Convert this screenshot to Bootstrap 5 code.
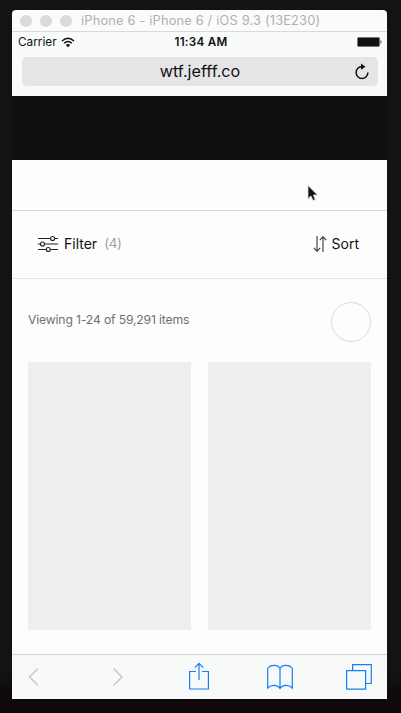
<!DOCTYPE html>
<html lang="en">
<head>
<meta charset="utf-8">
<meta name="viewport" content="width=device-width, initial-scale=1">
<title>iPhone 6</title>
<link href="https://cdn.jsdelivr.net/npm/bootstrap@5.3.0/dist/css/bootstrap.min.css" rel="stylesheet">
<style>
body{background:linear-gradient(#131313 0,#131313 670px,#0e090a 695px);font-family:Inter,"Liberation Sans",sans-serif;height:713px;color:#111;line-height:1}
.phone{width:375px;height:689px;margin:10px 0 0 12px;border-radius:4px 4px 0 0}
.titlebar{height:22px;background:#fafbfb;border-bottom:1px solid #d8d9d9;padding-left:8px;font-size:12.8px;letter-spacing:.19px;color:#b0b0b0}
.dot{width:12px;height:12px;background:#dadada;margin-right:8px}
.wintitle{padding-top:2px;margin-left:1px}
.chrome{height:64px;background:#f9fafa}
.status{height:20px;padding:2px 5px 0 6px;font-size:11.8px}
.status>*{flex:1 1 0}
.clock{font-weight:600;font-size:11.7px;letter-spacing:.25px;padding-left:2px}
.battery{padding-bottom:2px}
.address{height:29px;margin:5px 9px 0 10px;background:#e5e5e7;border-radius:5px;font-size:16.2px;padding-right:8px}
.hero{height:64px;background:#101010}
.blank{height:51px;border-bottom:1px solid #d5d7d9}
.tools{height:68px;border-bottom:1px solid #e1e3e5;padding:0 28px 2px 26px;font-size:14px}
.page{background:#fdfdfd}
.summary{height:83px;padding:2px 16px 0;color:#707070}
.count{font-size:12.2px;letter-spacing:-.16px;padding-bottom:3px}
.ring{width:40px;height:40px;border:1px solid #d9dadb}
.tile{height:268px;background:#edeeee}
.tiles{gap:17px;padding:0 16px}
.bottombar{height:45px;background:#f8f9f9;border-top:1px solid #d5d5d4;padding:0 15px 0 16px}
.bottombar svg,.tools svg{flex:none;display:block}
.next{margin-left:72px}
.share{margin:0 58px 2px 65px}
.tabs{margin-left:53px}
.filter{padding-left:2px}
.pointer{left:306px;top:184px}
.muted{color:#a0a0a0;font-size:13.4px;margin-left:7px;letter-spacing:-.3px}
</style>
<script src="https://cdn.jsdelivr.net/npm/bootstrap@5.3.0/dist/js/bootstrap.bundle.min.js"></script>
</head>
<body class="overflow-hidden position-relative">
<main class="phone d-flex flex-column overflow-hidden text-nowrap">
  <header class="titlebar d-flex align-items-center">
    <span class="dot rounded-circle"></span><span class="dot rounded-circle"></span><span class="dot rounded-circle"></span>
    <span class="wintitle">iPhone 6 - iPhone 6 / iOS 9.3 (13E230)</span>
  </header>
  <div class="chrome">
    <div class="status d-flex align-items-center">
      <span class="d-flex align-items-center gap-1">Carrier
        <svg width="14" height="11" viewBox="0 0 14 11" fill="none" stroke="#111" stroke-width="1.5"><path d="M1 4Q7-1.600 13 4M3.100 6.300Q7 2.800 10.900 6.300"/><path d="M4.800 8Q7 6 9.200 8L7 10.300Z" fill="#111" stroke="none"/></svg>
      </span>
      <span class="clock text-center">11:34 AM</span>
      <span class="battery d-flex justify-content-end"><svg width="25" height="10" viewBox="0 0 25 10"><rect x=".5" y=".5" width="22" height="9" rx="1" fill="#111" stroke="#777"/><path d="M23.500 3q2 2 0 4z" fill="#222"/></svg></span>
    </div>
    <div class="address d-flex align-items-center">
      <span class="flex-fill text-center ps-4">wtf.jefff.co</span>
      <svg width="16" height="18" viewBox="0 0 16 18"><path d="M8 3.600A5.900 5.900 0 1 0 13.900 9.500" fill="none" stroke="#111" stroke-width="1.500"/><path d="M7 .6 11.500 3.700 7 6.800Z" fill="#111"/></svg>
    </div>
  </div>
  <div class="hero"></div>
  <section class="page flex-fill">
    <div class="blank"></div>
    <div class="tools d-flex align-items-center justify-content-between">
      <div class="d-flex align-items-center">
        <svg class="me-1" width="20" height="18" viewBox="0 0 20 18" fill="none" stroke="#222" stroke-width="1.100"><path d="M0 3.500h12.400M16.800 3.500H20M0 9h2.300M6.700 9H20M0 14.500h8M12.400 14.500H20"/><circle cx="14.600" cy="3.500" r="2"/><circle cx="4.500" cy="9" r="2"/><circle cx="10.300" cy="14.500" r="2"/></svg>
        <span class="filter">Filter</span><span class="muted">(4)</span>
      </div>
      <div class="d-flex align-items-center">
        <svg class="me-1" width="15" height="18" viewBox="0 0 15 18" fill="none" stroke="#333" stroke-width="1.100"><path d="M4 1v15M.8 12.800 4 16.300 7.200 12.800M10 17V2M6.800 5.200 10 1.700 13.200 5.200"/></svg>
        <span>Sort</span>
      </div>
    </div>
    <div class="summary d-flex align-items-center justify-content-between"><span class="count">Viewing 1-24 of 59,291 items</span><span class="ring rounded-circle"></span></div>
    <div class="tiles d-flex"><div class="tile flex-fill"></div><div class="tile flex-fill"></div></div>
  </section>
  <footer class="bottombar d-flex align-items-center">
    <svg width="12" height="20" viewBox="0 0 12 20" fill="none" stroke="#c7c7c7" stroke-width="1.500"><path d="M10 1.500 1.500 10l8.500 8.500"/></svg>
    <svg class="next" width="12" height="20" viewBox="0 0 12 20" fill="none" stroke="#c7c7c7" stroke-width="1.500"><path d="M1.500 1.500 10 10l-8.500 8.500"/></svg>
    <svg class="share" width="20" height="28" viewBox="0 0 20 28" fill="none" stroke="#147efb" stroke-width="1.200"><path d="M7 9.500H.6v17.500h18.800V9.500H13M10 18V1.500M5.800 5.600 10 1.300l4.200 4.300"/></svg>
    <svg width="26" height="26" viewBox="0 0 26 26" fill="none" stroke="#147efb" stroke-width="1.200"><path d="M13 4.500C11 .4 3.500.4.700 4.500v19.500C4 20.500 10.500 20.500 13 24.500 15.500 20.500 22 20.500 25.300 24v-19.500C22.500.4 15 .4 13 4.500v20"/></svg>
    <svg class="tabs" width="26" height="26" viewBox="0 0 26 26" fill="none" stroke="#147efb" stroke-width="1.200"><path d="M.6 6.600h19v18.500H.6zM6.600 6.500V.700h18.700v18.800h-5.500"/></svg>
  </footer>
</main>
<svg class="pointer position-absolute" width="14" height="19" viewBox="0 0 14 19"><path d="M2 1.500v13.200l3-2.800 2 4.600 2.300-1-2-4.500h4.200Z" fill="#111" stroke="#ddd" stroke-width=".8"/></svg>
</body>
</html>
